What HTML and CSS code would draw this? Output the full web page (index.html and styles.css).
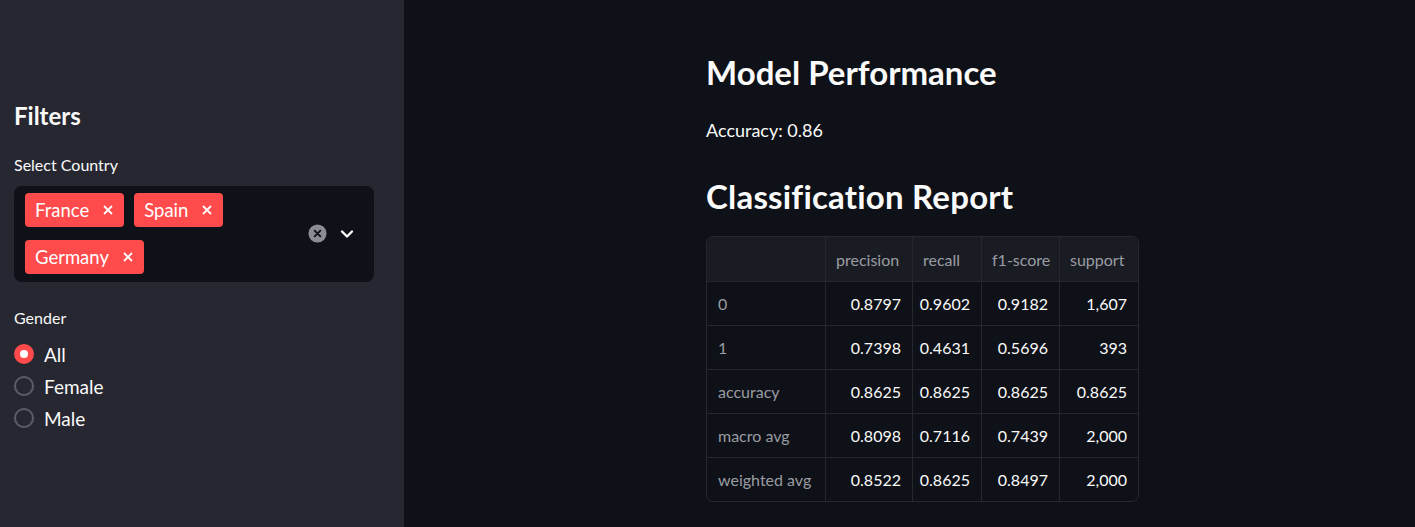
FILE: index.html
```html
<!DOCTYPE html>
<html lang="en">
<head>
<meta charset="utf-8">
<title>Model Performance</title>
<link rel="stylesheet" href="styles.css">
</head>
<body>
<aside class="sidebar">
  <h2 class="side-title">Filters</h2>
  <div class="field-label">Select Country</div>
  <div class="multiselect">
    <div class="tags">
      <span class="tag">France<svg class="tag-x" viewBox="0 0 12 12"><path d="M2 2L10 10M10 2L2 10"/></svg></span>
      <span class="tag">Spain<svg class="tag-x" viewBox="0 0 12 12"><path d="M2 2L10 10M10 2L2 10"/></svg></span>
      <span class="tag">Germany<svg class="tag-x" viewBox="0 0 12 12"><path d="M2 2L10 10M10 2L2 10"/></svg></span>
    </div>
    <div class="ms-icons">
      <svg class="clear-icon" viewBox="0 0 20 20"><circle cx="10" cy="10" r="9.5" fill="#8a8c96"/><path d="M7 7L13 13M13 7L7 13" stroke="#0e1117" stroke-width="2" stroke-linecap="round"/></svg>
      <svg class="chevron" viewBox="0 0 14 10"><path d="M2 2.5L7 7.5L12 2.5" fill="none" stroke="#fafafa" stroke-width="2.4" stroke-linecap="round" stroke-linejoin="round"/></svg>
    </div>
  </div>
  <div class="field-label gender-label">Gender</div>
  <div class="radios">
    <label class="radio"><span class="dot checked"></span>All</label>
    <label class="radio"><span class="dot"></span>Female</label>
    <label class="radio"><span class="dot"></span>Male</label>
  </div>
</aside>
<main class="main">
  <div class="content">
    <h2 class="heading">Model Performance</h2>
    <p class="accuracy">Accuracy: 0.86</p>
    <h2 class="heading heading-report">Classification Report</h2>
    <div class="report">
      <div class="cell head"></div>
      <div class="cell head">precision</div>
      <div class="cell head">recall</div>
      <div class="cell head">f1-score</div>
      <div class="cell head last-col">support</div>

      <div class="cell idx">0</div>
      <div class="cell num">0.8797</div>
      <div class="cell num">0.9602</div>
      <div class="cell num">0.9182</div>
      <div class="cell num last-col">1,607</div>

      <div class="cell idx">1</div>
      <div class="cell num">0.7398</div>
      <div class="cell num">0.4631</div>
      <div class="cell num">0.5696</div>
      <div class="cell num last-col">393</div>

      <div class="cell idx">accuracy</div>
      <div class="cell num">0.8625</div>
      <div class="cell num">0.8625</div>
      <div class="cell num">0.8625</div>
      <div class="cell num last-col">0.8625</div>

      <div class="cell idx">macro avg</div>
      <div class="cell num">0.8098</div>
      <div class="cell num">0.7116</div>
      <div class="cell num">0.7439</div>
      <div class="cell num last-col">2,000</div>

      <div class="cell idx last-row">weighted avg</div>
      <div class="cell num last-row">0.8522</div>
      <div class="cell num last-row">0.8625</div>
      <div class="cell num last-row">0.8497</div>
      <div class="cell num last-col last-row">2,000</div>
    </div>
  </div>
</main>
</body>
</html>
```

FILE: styles.css
```css
* { box-sizing: border-box; }
html, body { margin: 0; padding: 0; }
body {
  display: flex;
  width: 1415px;
  height: 527px;
  overflow: hidden;
  font-family: "Lato", "Liberation Sans", sans-serif;
  color: #fafafa;
  background: #0e1117;
}

/* Sidebar */
.sidebar {
  width: 404px;
  flex: 0 0 404px;
  background: #262730;
  padding: 101px 30px 0 14px;
}
.side-title {
  margin: 0;
  font-size: 24px;
  line-height: 30px;
  font-weight: 700;
}
.field-label {
  margin-top: 23px;
  font-size: 16px;
  line-height: 22px;
}
.multiselect {
  margin-top: 10px;
  width: 360px;
  height: 96px;
  background: #0e1117;
  border-radius: 8px;
  padding: 7px 20px 8px 11px;
  display: flex;
  align-items: center;
}
.tags {
  flex: 1;
  display: flex;
  flex-wrap: wrap;
  gap: 13px 10px;
  align-self: flex-start;
  max-width: 290px;
}
.tag {
  display: inline-flex;
  align-items: center;
  height: 34px;
  padding: 0 10px 0 10px;
  background: #ff4b4b;
  border-radius: 4px;
  font-size: 18.5px;
  color: #fff;
  gap: 13px;
}
.tag-x {
  width: 12px;
  height: 12px;
  stroke: #fff;
  stroke-width: 1.8;
  fill: none;
}
.ms-icons {
  display: flex;
  align-items: center;
  gap: 13px;
}
.clear-icon { width: 19px; height: 19px; }
.chevron { width: 14px; height: 10px; }

.gender-label { margin-top: 25px; }
.radios {
  margin-top: 9px;
  display: flex;
  flex-direction: column;
}
.radio {
  display: flex;
  align-items: center;
  height: 32px;
  font-size: 19px;
  gap: 10px;
}
.dot {
  width: 20px;
  height: 20px;
  border-radius: 50%;
  border: 2px solid #5c5e67;
  display: inline-flex;
  align-items: center;
  justify-content: center;
}
.dot.checked {
  border: none;
  background: #ff4b4b;
}
.dot.checked::after {
  content: "";
  width: 8px;
  height: 8px;
  border-radius: 50%;
  background: #fff;
}

/* Main */
.main {
  flex: 1;
  padding: 52px 0 0 302px;
}
.content { width: 460px; }
.heading {
  margin: 0;
  font-size: 33px;
  line-height: 40px;
  font-weight: 700;
}
.accuracy {
  margin: 25px 0 0;
  font-size: 18px;
  line-height: 26px;
}
.heading-report { margin-top: 33px; letter-spacing: 0.2px; }

.report {
  margin-top: 20px;
  width: 433px;
  display: grid;
  grid-template-columns: 119px 87px 69px 78px 78px;
  grid-template-rows: 45px 44px 44px 44px 44px 43px;
  border: 1px solid #26282e;
  border-radius: 7px;
  overflow: hidden;
  font-size: 16px;
}
.cell {
  display: flex;
  align-items: center;
  padding: 0 11px 0 11px;
  border-right: 1px solid #26282e;
  border-bottom: 1px solid #26282e;
  white-space: nowrap;
}
.cell.last-col { border-right: none; }
.cell.last-row { border-bottom: none; }
.head {
  background: #1a1c23;
  color: #9a9ca3;
  padding-left: 10px;
}
.idx { color: #9a9ca3; padding-left: 11px; }
.num { justify-content: flex-end; color: #fafafa; }
```
